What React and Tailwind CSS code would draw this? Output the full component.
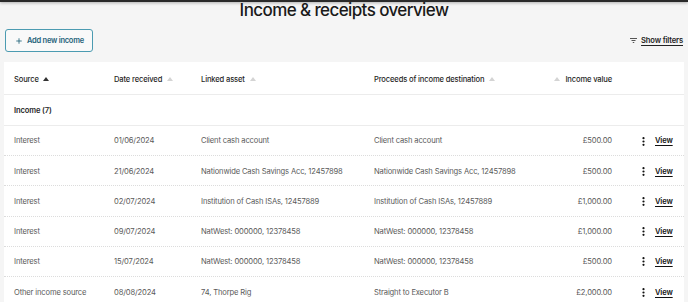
import { Plus } from "lucide-react";

const rows = [
  ["Interest", "01/06/2024", "Client cash account", "Client cash account", "£500.00"],
  ["Interest", "21/06/2024", "Nationwide Cash Savings Acc, 12457898", "Nationwide Cash Savings Acc, 12457898", "£500.00"],
  ["Interest", "02/07/2024", "Institution of Cash ISAs, 12457889", "Institution of Cash ISAs, 12457889", "£1,000.00"],
  ["Interest", "09/07/2024", "NatWest: 000000, 12378458", "NatWest: 000000, 12378458", "£1,000.00"],
  ["Interest", "15/07/2024", "NatWest: 000000, 12378458", "NatWest: 000000, 12378458", "£500.00"],
  ["Other income source", "08/08/2024", "74, Thorpe Rig", "Straight to Executor B", "£2,000.00"],
];

function SortArrow({ active }) {
  return (
    <svg width="6" height="4" viewBox="0 0 6 4" className="inline-block">
      <path d="M0 4 L3 0 L6 4 Z" fill={active ? "#333" : "#d4d4d4"} />
    </svg>
  );
}

function Kebab() {
  return (
    <svg width="3" height="9" viewBox="0 0 3 9">
      <circle cx="1.5" cy="1.2" r="1.1" fill="#111" />
      <circle cx="1.5" cy="4.5" r="1.1" fill="#111" />
      <circle cx="1.5" cy="7.8" r="1.1" fill="#111" />
    </svg>
  );
}

export default function App() {
  return (
    <div className="min-h-screen bg-[#f5f5f5] font-['Inter',sans-serif] overflow-hidden">
      <div className="h-[2px] bg-[#2a2a2a] shadow-[0_1px_3px_rgba(0,0,0,0.35)]" />

      <h1 className="text-center text-[17px] leading-[16px] font-medium text-[#1a1a1a] tracking-[-0.6px]">
        Income &amp; receipts overview
      </h1>

      <div className="flex items-center justify-between pl-[5px] pr-[5px] mt-[11px]">
        <button className="h-[23px] w-[88px] flex items-center gap-[4px] pl-[9px] whitespace-nowrap border border-[#4b9bb1] rounded-[3px] bg-white/40 text-[#1f6379] text-[7.5px] font-semibold tracking-[-0.25px]">
          <Plus size={8} strokeWidth={2.5} />
          Add new income
        </button>
        <div className="flex items-center gap-[4px] text-[7.6px] font-semibold text-[#222] tracking-[-0.15px]">
          <svg width="7" height="5" viewBox="0 0 7 5">
            <rect x="0" y="0" width="7" height="1" fill="#555" />
            <rect x="1.5" y="2" width="4" height="1" fill="#555" />
            <rect x="2.75" y="4" width="1.5" height="1" fill="#555" />
          </svg>
          <span className="underline underline-offset-[1.5px]">Show filters</span>
        </div>
      </div>

      <div className="mx-[4px] mt-[10px] bg-white text-[7.6px] tracking-[-0.15px]">
        <div className="h-[33px] flex items-center pl-[10px] pt-[3px] font-medium text-[#1f1f1f] border-b border-[#ececec]">
          <div className="w-[100px] flex items-center gap-[4px]">Source <SortArrow active /></div>
          <div className="w-[87px] flex items-center gap-[5px]">Date received <SortArrow /></div>
          <div className="w-[173px] flex items-center gap-[5px]">Linked asset <SortArrow /></div>
          <div className="w-[166px] flex items-center gap-[5px]">Proceeds of income destination <SortArrow /></div>
          <div className="w-[72px] flex items-center justify-end gap-[5px]"><SortArrow /> Income value</div>
        </div>
        <div className="h-[31px] flex items-center pl-[10px] pt-[1px] font-semibold text-[#1f1f1f] border-b border-[#ececec]">
          Income (7)
        </div>
        {rows.map((r, i) => (
          <div
            key={i}
            className={`h-[30.2px] flex items-center pl-[10px] pt-[1px] text-[#5a5a5a] ${i < rows.length - 1 ? "border-b border-dotted border-[#dcdcdc]" : ""}`}
          >
            <div className="w-[100px]">{r[0]}</div>
            <div className="w-[87px]">{r[1]}</div>
            <div className="w-[173px]">{r[2]}</div>
            <div className="w-[166px]">{r[3]}</div>
            <div className="w-[72px] text-right">{r[4]}</div>
            <div className="ml-[30px] flex items-center"><Kebab /></div>
            <a className="ml-[10px] text-[#111] font-semibold underline underline-offset-[1.5px]">View</a>
          </div>
        ))}
      </div>
    </div>
  );
}
